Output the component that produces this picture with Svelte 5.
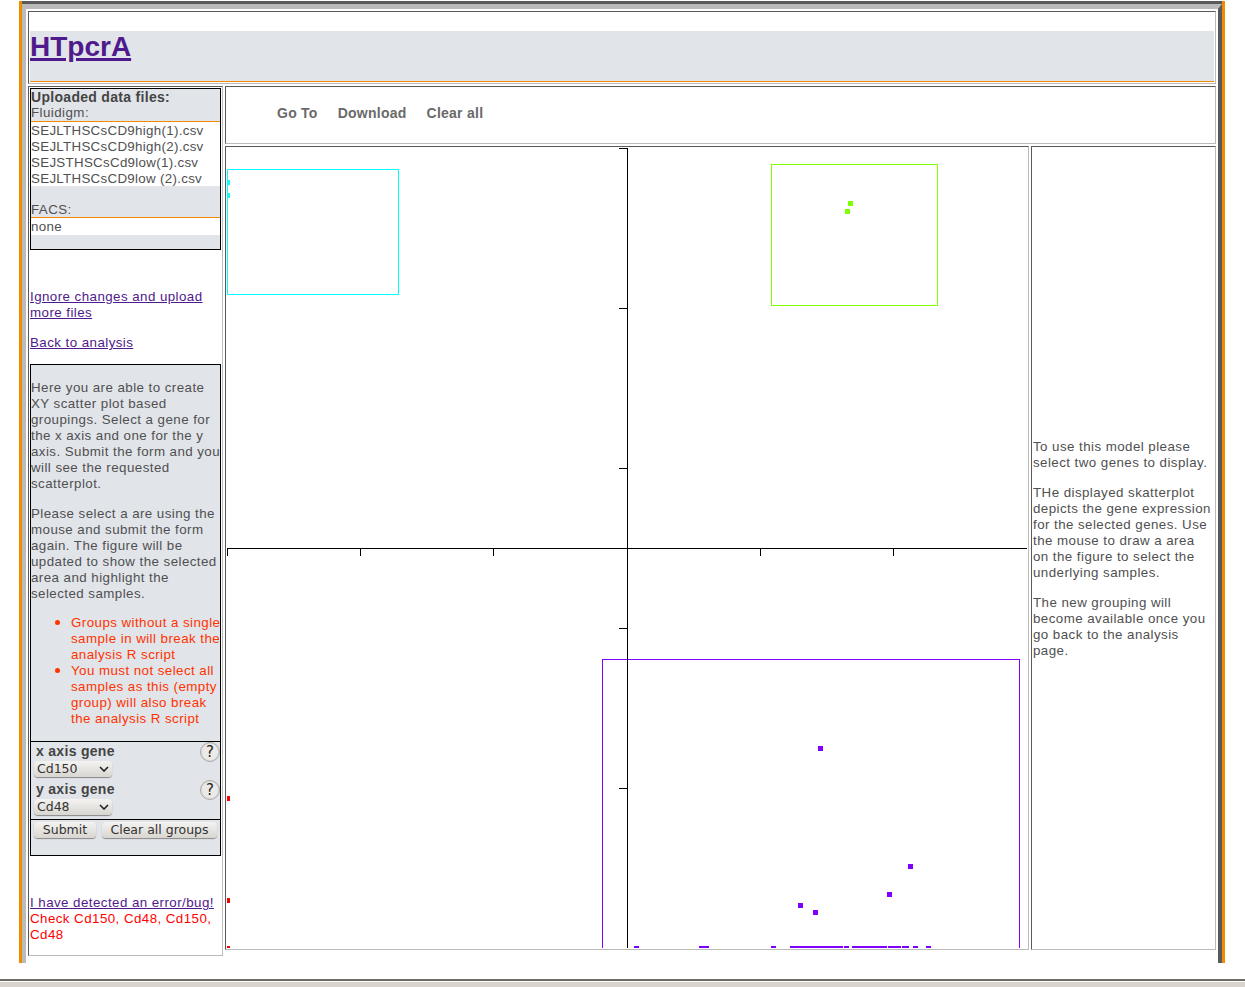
<script>
	const uploaded = [
		"SEJLTHSCsCD9high(1).csv",
		"SEJLTHSCsCD9high(2).csv",
		"SEJSTHSCsCd9low(1).csv",
		"SEJLTHSCsCD9low (2).csv"
	];

	const yTicks = [148, 308, 468, 628, 788];
	const xTicks = [227, 360, 493, 627, 760, 893];

	// [x, y, w, h] in page pixels, the svg viewBox starts at the canvas origin
	const cyan = [[227, 180, 3, 5], [227, 193, 3, 5]];
	const green = [[848, 201, 5, 5], [845, 209, 5, 5]];
	const purple = [
		[818, 746, 5, 5], [908, 864, 5, 5], [887, 892, 5, 5], [798, 903, 5, 5], [813, 910, 5, 5],
		[634, 946, 5, 2], [699, 946, 10, 2], [771, 946, 5, 2], [790, 946, 53, 2], [844, 946, 5, 2],
		[852, 946, 35, 2], [888, 946, 13, 2], [902, 946, 7, 2], [913, 946, 5, 2], [926, 946, 5, 2]
	];
	const red = [[227, 796, 3, 5], [227, 898, 3, 5], [227, 946, 3, 2]];
</script>

<div class="shell">
	<div class="frame">
		<div class="bevel">
			<header class="panel top">
				<h1><a href="#top">HTpcrA</a></h1>
			</header>

			<div class="columns">
				<aside class="panel side">
					<div class="box files">
						<div class="head"><b>Uploaded data files:</b>Fluidigm:</div>
						<ul class="filelist">
							{#each uploaded as name}
								<li>{name}</li>
							{/each}
						</ul>
						<div class="head facs">FACS:</div>
						<ul class="filelist"><li>none</li></ul>
						<div class="tail"></div>
					</div>

					<p class="link-a"><a href="#upload">Ignore changes and upload more files</a></p>
					<p class="link-b"><a href="#back">Back to analysis</a></p>

					<div class="box form">
						<div class="intro">
							<p>Here you are able to create XY scatter plot based groupings. Select a gene for the x axis and one for the y axis. Submit the form and you will see the requested scatterplot.</p>
							<p>Please select a are using the mouse and submit the form again. The figure will be updated to show the selected area and highlight the selected samples.</p>
							<ul class="warn">
								<li>Groups without a single sample in will break the analysis R script</li>
								<li>You must not select all samples as this (empty group) will also break the analysis R script</li>
							</ul>
						</div>
						<div class="genes">
							<div class="gene">
								<label for="xgene">x axis gene</label>
								<span class="help">?</span>
								<div class="pick">
									<select id="xgene"><option>Cd150</option></select>
									<svg width="10" height="6" viewBox="0 0 10 6"><path d="M1 1l4 4 4-4" fill="none" stroke="#222" stroke-width="1.6" /></svg>
								</div>
							</div>
							<div class="gene">
								<label for="ygene">y axis gene</label>
								<span class="help">?</span>
								<div class="pick">
									<select id="ygene"><option>Cd48</option></select>
									<svg width="10" height="6" viewBox="0 0 10 6"><path d="M1 1l4 4 4-4" fill="none" stroke="#222" stroke-width="1.6" /></svg>
								</div>
							</div>
						</div>
						<div class="actions">
							<button class="submit">Submit</button>
							<button class="clear">Clear all groups</button>
						</div>
					</div>

					<p class="bug"><a href="#bug">I have detected an error/bug!</a><br /><span>Check Cd150, Cd48, Cd150, Cd48</span></p>
				</aside>

				<div class="main">
					<nav class="panel toolbar">
						<span>Go To</span>
						<span>Download</span>
						<span>Clear all</span>
					</nav>
					<div class="lower">
						<div class="panel chart">
							<svg width="800" height="800" viewBox="227 148 800 800" shape-rendering="crispEdges">
								<rect x="227.5" y="169.5" width="171" height="125" fill="none" stroke="#00ffff" />
								<rect x="771.5" y="164.5" width="166" height="141" fill="none" stroke="#80ff00" />
								<rect x="602.5" y="659.5" width="417" height="320" fill="none" stroke="#8000ff" />
								<path d="M627.5 148v800M227 548.5h800" stroke="#000" fill="none" />
								{#each yTicks as y}
									<path d="M619 {y + 0.5}h8" stroke="#000" />
								{/each}
								{#each xTicks as x}
									<path d="M{x + 0.5} 548v8" stroke="#000" />
								{/each}
								{#each cyan as [x, y, w, h]}<rect {x} {y} width={w} height={h} fill="#00ffff" />{/each}
								{#each green as [x, y, w, h]}<rect {x} {y} width={w} height={h} fill="#80ff00" />{/each}
								{#each purple as [x, y, w, h]}<rect {x} {y} width={w} height={h} fill="#8000ff" />{/each}
								{#each red as [x, y, w, h]}<rect {x} {y} width={w} height={h} fill="#ff0000" />{/each}
							</svg>
						</div>
						<div class="panel notes">
							<p>To use this model please select two genes to display.</p>
							<p>THe displayed skatterplot depicts the gene expression for the selected genes. Use the mouse to draw a area on the figure to select the underlying samples.</p>
							<p>The new grouping will become available once you go back to the analysis page.</p>
						</div>
					</div>
				</div>
			</div>
		</div>
	</div>
</div>
<div class="page-foot"></div>

<style>
	:global(body) {
		background: #fff;
		color: #505050;
		font-family: "Liberation Sans", Arial, sans-serif;
		font-size: 13.33px;
		line-height: 16px;
		letter-spacing: 0.44px;
	}

	a {
		color: #4f1a8c;
	}

	b {
		display: block;
		font-size: 14px;
		letter-spacing: 0.3px;
		color: #444;
	}

	p {
		margin: 0;
	}

	.shell {
		width: 1206px;
		height: 962px;
		margin-left: 19px;
		border-left: 3px solid #f08c00;
		border-right: 3px solid #f08c00;
		box-sizing: border-box;
	}

	.frame {
		box-sizing: border-box;
		width: 1200px;
		height: 967px;
		margin-top: 1px;
		border-top: 3px solid #5a5a5a;
		background: #fff;
	}

	.bevel {
		box-sizing: border-box;
		height: 964px;
		border-style: solid;
		border-width: 5px 4px 4px 4px;
		border-color: #bbb #5a5a5a #5a5a5a #bbb;
		padding: 2px 2px 9px 2px;
		display: flex;
		flex-direction: column;
		gap: 2px;
	}

	.panel {
		box-sizing: border-box;
		border: 1px solid;
		border-color: #5a5a5a #bbb #bbb #5a5a5a;
		background: #fff;
	}

	.top {
		height: 73px;
		padding: 19px 1px 1px;
	}

	h1 {
		margin: 0;
		height: 51px;
		box-sizing: border-box;
		background: #e1e4e9;
		border-bottom: 1px solid #f08c00;
		font-size: 28px;
		line-height: 32px;
		letter-spacing: 0;
		padding-bottom: 1px;
	}

	h1 a {
		text-decoration-thickness: 3px;
	}

	.columns {
		flex: 1;
		display: flex;
		gap: 2px;
		min-height: 0;
	}

	.side {
		width: 195px;
		height: 870px;
		padding: 1px;
		flex: none;
	}

	.box {
		box-sizing: border-box;
		border: 1px solid #000;
		background: #e1e4e9;
		width: 191px;
	}

	.files {
		height: 162px;
	}

	.head {
		position: relative;
		background: #e1e4e9;
		border-bottom: 1px solid #f08c00;
	}

	.facs {
		padding-top: 16px;
		line-height: 15px;
	}

	.filelist {
		list-style: none;
		margin: 0 0 -1px;
		padding: 1px 0 0;
		background: #fff;
		letter-spacing: 0.3px;
	}

	.link-a {
		margin-top: 39px;
	}

	.link-b {
		margin-top: 14px;
	}

	.form {
		height: 492px;
		margin-top: 13px;
	}

	.intro {
		height: 376px;
		margin-right: -4px;
		padding-top: 15px;
		box-sizing: border-box;
	}

	.intro p + p {
		margin-top: 14px;
	}

	.warn {
		margin: 12px 0 0;
		padding: 0 0 0 40px;
		color: #ff3300;
	}

	.warn li::marker {
		font-size: 15px;
	}

	.warn li + li {
		margin-top: -1px;
	}

	.genes {
		border-top: 1px solid #000;
		border-bottom: 1px solid #000;
		height: 79px;
		box-sizing: border-box;
		padding-top: 1px;
	}

	.gene {
		position: relative;
		height: 38px;
		padding-left: 5px;
	}

	.gene label {
		display: block;
		font-weight: bold;
		font-size: 14px;
		letter-spacing: 0.3px;
		color: #444;
	}

	.help {
		position: absolute;
		right: 0;
		top: -1px;
		width: 18px;
		height: 18px;
		border: 1px solid #aaa;
		box-shadow: inset 0 0 0 1px #d8d8d8;
		border-radius: 50%;
		background: #eceae7;
		color: #222;
		font: 15px/18px "DejaVu Sans", sans-serif;
		text-align: center;
		letter-spacing: 0;
	}

	.pick {
		position: relative;
		width: 78px;
		margin: 2px 0 0 -2px;
	}

	.pick select {
		appearance: none;
		box-sizing: border-box;
		display: block;
		width: 78px;
		height: 16px;
		padding: 0 0 0 3px;
		border: none;
		border-radius: 4px;
		background: linear-gradient(#f4f3f1, #d9d6d1);
		box-shadow: 0 1px 1px #888;
		color: #333;
		font: 12.5px/16px "DejaVu Sans", sans-serif;
		letter-spacing: 0;
	}

	.pick svg {
		position: absolute;
		right: 3px;
		top: 5px;
	}

	.actions {
		display: flex;
		gap: 6px;
		padding: 2px 3px 0;
	}

	.actions button {
		box-sizing: border-box;
		height: 16px;
		padding: 0;
		border: none;
		border-radius: 4px;
		background: linear-gradient(#f4f3f1, #d9d6d1);
		box-shadow: 0 1px 1px #888;
		color: #333;
		font: 12.5px/16px "DejaVu Sans", sans-serif;
		letter-spacing: 0;
	}

	.submit {
		width: 62px;
	}

	.clear {
		width: 115px;
		flex: none;
	}

	.bug {
		margin-top: 39px;
	}

	.bug span {
		color: #ff0000;
	}

	.main {
		flex: 1;
		display: flex;
		flex-direction: column;
		gap: 2px;
		min-width: 0;
	}

	.toolbar {
		height: 58px;
		display: flex;
		align-items: center;
		padding: 0 0 4px 51px;
		gap: 20px;
		color: #6a6a6a;
		font-weight: bold;
		font-size: 14px;
		letter-spacing: 0.25px;
	}

	.lower {
		display: flex;
		gap: 2px;
	}

	.chart {
		width: 804px;
		height: 804px;
		padding: 1px;
		flex: none;
	}

	.chart svg {
		display: block;
	}

	.notes {
		flex: 1;
		height: 804px;
		padding: 3px 1px 1px;
		display: flex;
		flex-direction: column;
		justify-content: center;
		gap: 14px;
	}

	.page-foot {
		position: absolute;
		top: 979px;
		left: 0;
		right: 0;
		height: 8px;
		box-sizing: border-box;
		border-top: 2px solid #6f6a66;
		background: linear-gradient(#fff 1px, #d9d4ce 1px);
	}
</style>
